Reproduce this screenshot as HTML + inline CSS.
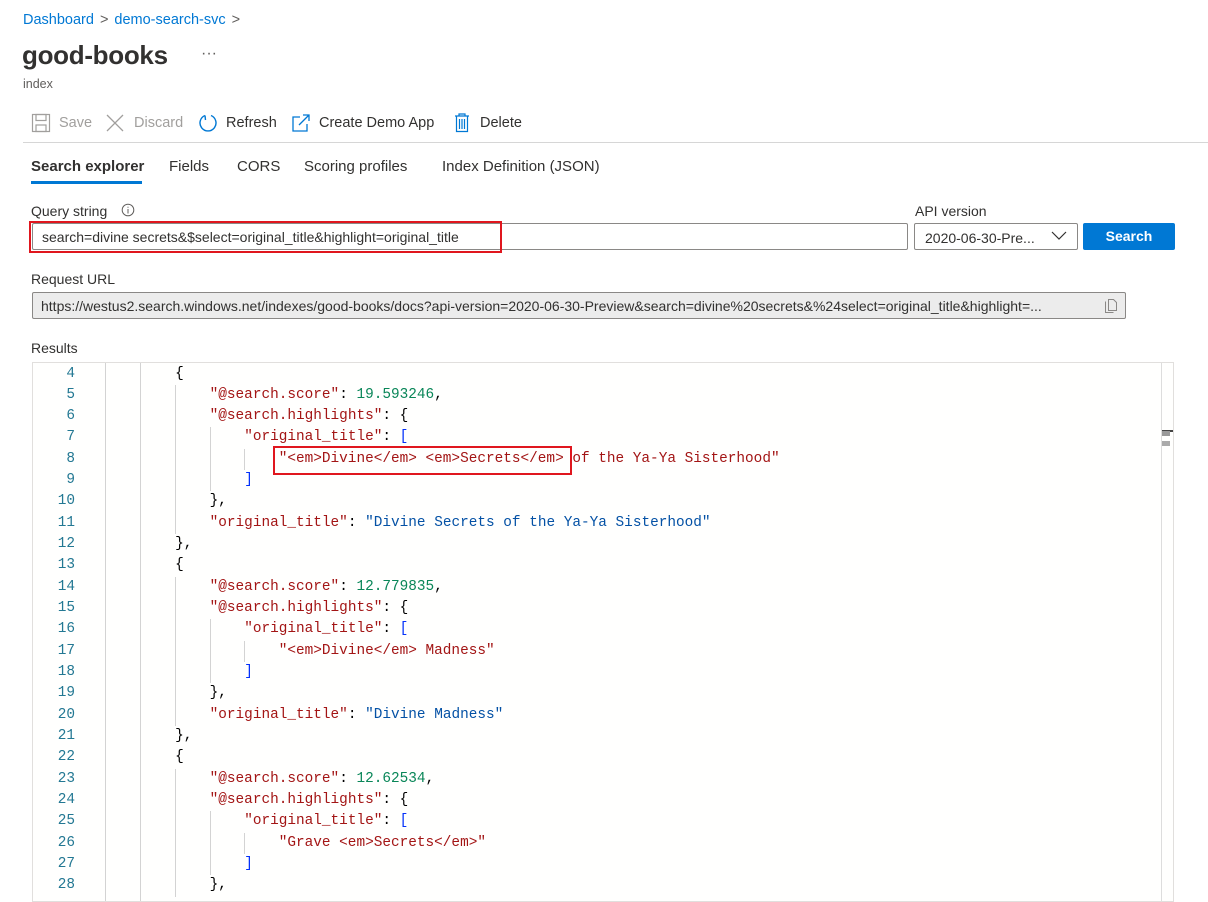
<!DOCTYPE html>
<html><head><meta charset="utf-8"><style>
*{margin:0;padding:0;box-sizing:border-box}
body{width:1208px;height:897px;overflow:hidden;background:#fff;font-family:"Liberation Sans",sans-serif;color:#323130;position:relative}
.a{position:absolute;white-space:nowrap}
.bc{top:12px;left:23px;font-size:14.5px;color:#0078d4}
.bc span{color:#605e5c;margin:0 6px}
h1{position:absolute;left:22px;top:40px;font-size:26px;font-weight:600;color:#323130;letter-spacing:-0.3px}
.tb{top:115px;font-size:14.5px}
.tab{top:158px;font-size:15px}
.lbl{font-size:14px}
.box{position:absolute;border:1px solid #8a8886;border-radius:2px;background:#fff}
.ed{position:absolute;left:32px;top:362px;width:1142px;height:540px;border:1px solid #e1dfdd;background:#fffffe;overflow:hidden}
.ln{position:absolute;left:0;width:42px;text-align:right;color:#237893;font-family:"Liberation Mono",monospace;font-size:14.4px}
.cl{position:absolute;left:73px;font-family:"Liberation Mono",monospace;font-size:14.4px;white-space:pre;color:#000}
.g{position:absolute;width:1px;background:#d3d3d3}
.k{color:#a31515}.s{color:#0451a5}.n{color:#098658}.b{color:#0431fa}
</style></head><body>
<div class="a bc">Dashboard<span>&gt;</span>demo-search-svc<span>&gt;</span></div>
<h1>good-books</h1>
<div class="a" style="left:201px;top:45px;font-size:16px;color:#605e5c">···</div>
<div class="a" style="left:23px;top:77px;font-size:12.5px;color:#605e5c">index</div>

<svg class="a" style="left:31px;top:113px" width="20" height="20" viewBox="0 0 20 20" fill="none" stroke="#a19f9d" stroke-width="1.2"><rect x="1.5" y="1.5" width="17" height="17"/><rect x="5" y="1.5" width="10" height="6"/><rect x="5" y="12" width="10" height="6.5"/></svg>
<div class="a tb" style="left:59px;color:#a19f9d">Save</div>
<svg class="a" style="left:105px;top:113px" width="20" height="20" stroke="#a19f9d" stroke-width="1.3"><path d="M2 2L18 18M18 2L2 18"/></svg>
<div class="a tb" style="left:134px;color:#a19f9d">Discard</div>
<svg class="a" style="left:198px;top:113px" width="20" height="20" fill="none" stroke="#0078d4" stroke-width="1.4"><path d="M7 2.5A8 8 0 1 0 13 2.5"/><path d="M7 2.5L7.5 7"/></svg>
<div class="a tb" style="left:226px">Refresh</div>
<svg class="a" style="left:291px;top:113px" width="20" height="20" fill="none" stroke="#0078d4" stroke-width="1.3"><path d="M9 4H2v14h14v-7"/><path d="M8 12L18 2M12 2h6v6"/></svg>
<div class="a tb" style="left:319px">Create Demo App</div>
<svg class="a" style="left:454px;top:113px" width="16" height="20" fill="none" stroke="#0078d4" stroke-width="1.2"><path d="M1 3h14M5 3V1h6v2M2.5 3v15.5h11V3M5.5 6v10M8 6v10M10.5 6v10"/></svg>
<div class="a tb" style="left:480px">Delete</div>
<div class="a" style="left:23px;top:142px;width:1185px;height:1px;background:#d6d6d6"></div>

<div class="a tab" style="left:31px;font-weight:600">Search explorer</div>
<div class="a" style="left:31px;top:181px;width:111px;height:3px;background:#0078d4"></div>
<div class="a tab" style="left:169px">Fields</div>
<div class="a tab" style="left:237px">CORS</div>
<div class="a tab" style="left:304px">Scoring profiles</div>
<div class="a tab" style="left:442px">Index Definition (JSON)</div>

<div class="a lbl" style="left:31px;top:203px">Query string</div>
<svg class="a" style="left:121px;top:203px" width="14" height="14" fill="none" stroke="#605e5c"><circle cx="7" cy="7" r="5.8"/><path d="M7 6v4.5M7 3.8v1"/></svg>
<div class="box" style="left:32px;top:223px;width:876px;height:27px"></div>
<div class="a" style="left:42px;top:229px;font-size:14px">search=divine secrets&amp;$select=original_title&amp;highlight=original_title</div>
<div class="a" style="left:29px;top:221px;width:473px;height:32px;border:2px solid #e0161e"></div>

<div class="a lbl" style="left:915px;top:203px">API version</div>
<div class="box" style="left:914px;top:223px;width:164px;height:27px"></div>
<div class="a" style="left:925px;top:230px;font-size:14px">2020-06-30-Pre...</div>
<svg class="a" style="left:1051px;top:231px" width="16" height="10" fill="none" stroke="#323130" stroke-width="1.2"><path d="M1 1l7 7 7-7"/></svg>
<div class="a" style="left:1083px;top:223px;width:92px;height:27px;background:#0078d4;border-radius:2px;color:#fff;font-weight:700;font-size:14px;text-align:center;line-height:26px">Search</div>

<div class="a lbl" style="left:31px;top:271px">Request URL</div>
<div class="box" style="left:32px;top:292px;width:1094px;height:27px;background:#ececec"></div>
<div class="a" style="left:41px;top:298px;font-size:14px;color:#323130;width:1050px;overflow:hidden">https://westus2.search.windows.net/indexes/good-books/docs?api-version=2020-06-30-Preview&amp;search=divine%20secrets&amp;%24select=original_title&amp;highlight=...</div>
<svg class="a" style="left:1104px;top:298px" width="14" height="16" fill="none" stroke="#8a8886"><path d="M1.5 3.5v11h8M4.5 1.5h5l3 3v8h-8z"/></svg>

<div class="a lbl" style="left:31px;top:340px">Results</div>
<div class="ed">
<div class="g" style="left:72px;top:0;height:540px"></div>
<div class="g" style="left:107px;top:0;height:540px"></div>
<div class="a" style="left:1128px;top:0;width:1px;height:540px;background:#ddd"></div>
<div class="a" style="left:1129px;top:67px;width:15px;height:2px;background:#444"></div>
<div class="a" style="left:1129px;top:68px;width:8px;height:5px;background:#999"></div>
<div class="a" style="left:1129px;top:78px;width:8px;height:5px;background:#aaa"></div>
<div id="code"></div>
</div>
<div class="a" style="left:273px;top:446px;width:299px;height:29px;border:2px solid #e0161e"></div>
<script>
var L=[
[8,'{'],
[12,'<span class="k">"@search.score"</span>: <span class="n">19.593246</span>,'],
[12,'<span class="k">"@search.highlights"</span>: {'],
[16,'<span class="k">"original_title"</span>: <span class="b">[</span>'],
[20,'<span class="k">"&lt;em&gt;Divine&lt;/em&gt; &lt;em&gt;Secrets&lt;/em&gt; of the Ya-Ya Sisterhood"</span>'],
[16,'<span class="b">]</span>'],
[12,'},'],
[12,'<span class="k">"original_title"</span>: <span class="s">"Divine Secrets of the Ya-Ya Sisterhood"</span>'],
[8,'},'],
[8,'{'],
[12,'<span class="k">"@search.score"</span>: <span class="n">12.779835</span>,'],
[12,'<span class="k">"@search.highlights"</span>: {'],
[16,'<span class="k">"original_title"</span>: <span class="b">[</span>'],
[20,'<span class="k">"&lt;em&gt;Divine&lt;/em&gt; Madness"</span>'],
[16,'<span class="b">]</span>'],
[12,'},'],
[12,'<span class="k">"original_title"</span>: <span class="s">"Divine Madness"</span>'],
[8,'},'],
[8,'{'],
[12,'<span class="k">"@search.score"</span>: <span class="n">12.62534</span>,'],
[12,'<span class="k">"@search.highlights"</span>: {'],
[16,'<span class="k">"original_title"</span>: <span class="b">[</span>'],
[20,'<span class="k">"Grave &lt;em&gt;Secrets&lt;/em&gt;"</span>'],
[16,'<span class="b">]</span>'],
[12,'},']];
var h='',lh=21.33,cw=8.64;
for(var i=0;i<L.length;i++){var t=i*lh+0.5;
h+='<div class="ln" style="top:'+t+'px;line-height:'+lh+'px">'+(i+4)+'</div>';
for(var k=8;k<L[i][0];k+=4){h+='<div class="g" style="left:'+(73+k*cw)+'px;top:'+t+'px;height:'+lh+'px"></div>';}
h+='<div class="cl" style="top:'+t+'px;line-height:'+lh+'px">'+' '.repeat(L[i][0])+L[i][1]+'</div>';}
document.getElementById('code').innerHTML=h;
</script>
</body></html>
